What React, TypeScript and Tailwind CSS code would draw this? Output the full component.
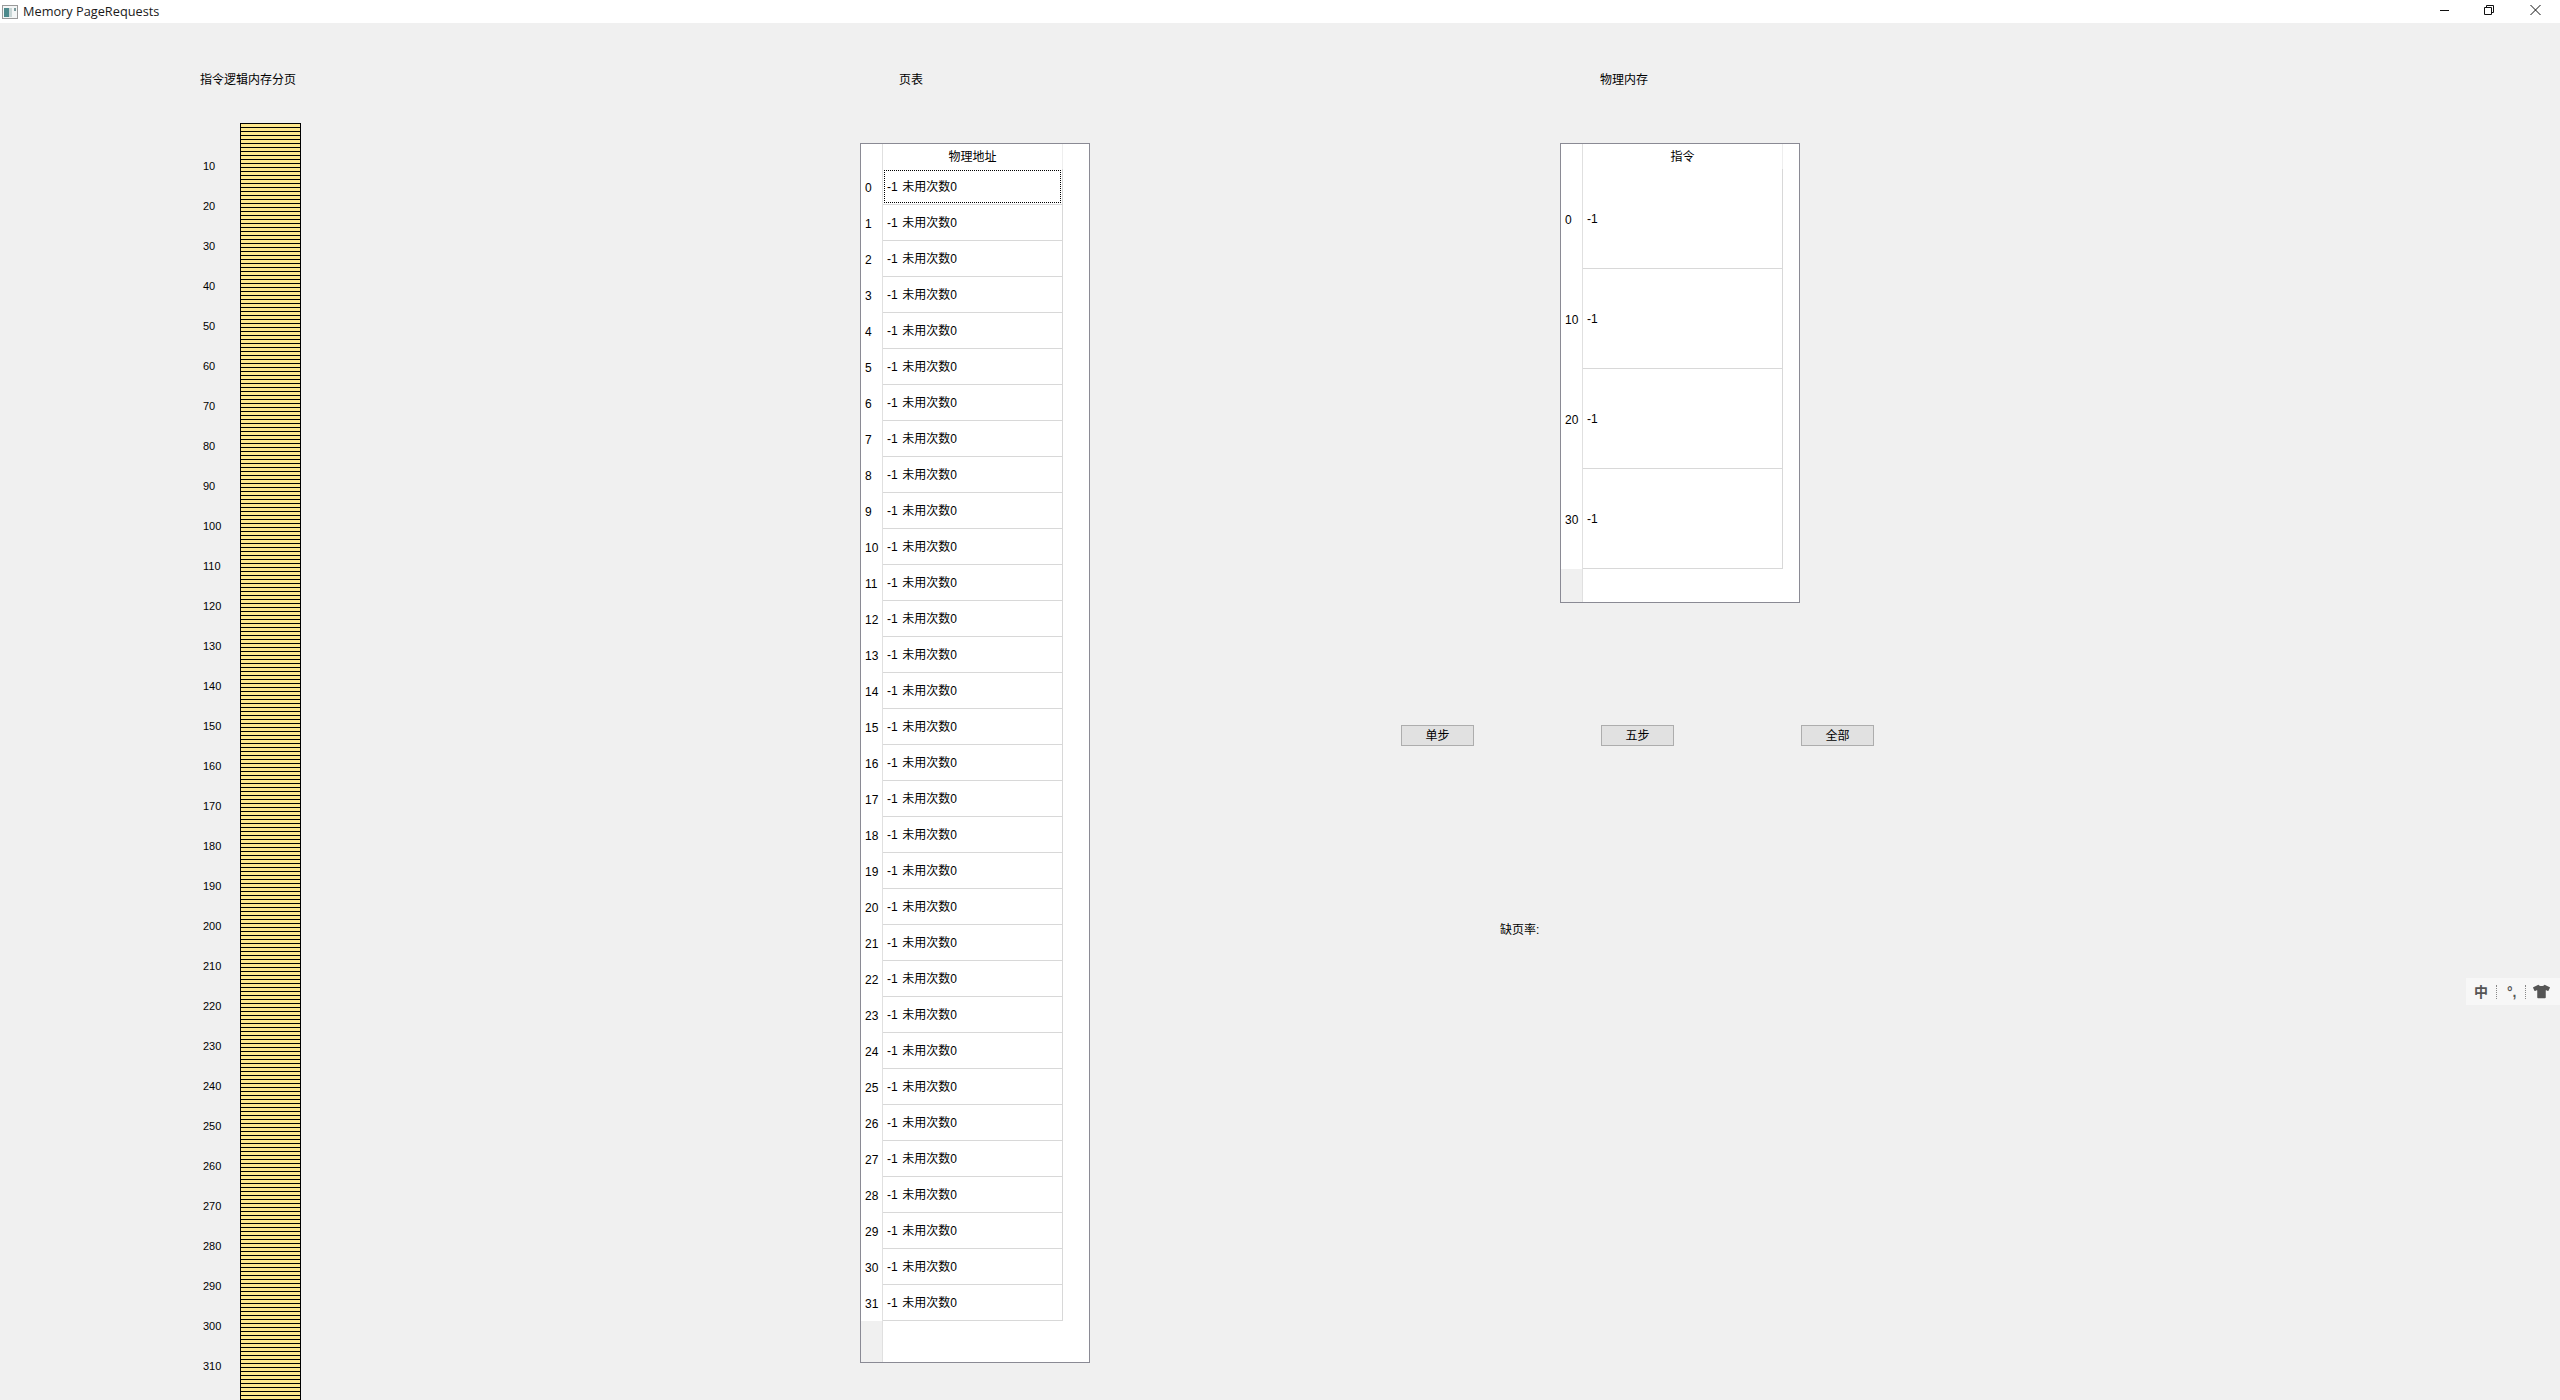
import { FaTshirt } from "react-icons/fa"

const pageLabels = Array.from({ length: 31 }, (_, i) => (i + 1) * 10)
const pageRows = Array.from({ length: 32 }, (_, i) => i)
const memoryRows = [0, 10, 20, 30]

function WindowIcon() {
  return (
    <svg width="16" height="14" viewBox="0 0 16 14" className="shrink-0">
      <rect x="0.5" y="0.5" width="15" height="13" fill="#f4f6f6" stroke="#9a9a9a" />
      <rect x="2" y="3" width="5" height="9" fill="#4d8a8c" />
      <rect x="7" y="3" width="3" height="9" fill="#c9d6d6" />
      <rect x="12" y="3" width="2" height="3" fill="#7a9a9c" />
    </svg>
  )
}

function TitleBar() {
  return (
    <div className="flex h-[23px] items-center bg-white pl-[2px]">
      <WindowIcon />
      <span className="ml-[5px] font-['Open_Sans',sans-serif] text-[12.75px] text-[#1a1a1a]">Memory PageRequests</span>
      <div className="ml-auto flex h-full items-start">
        <svg width="46" height="20" viewBox="0 0 46 20">
          <path d="M2 10.5H11" stroke="#111" />
        </svg>
        <svg width="46" height="20" viewBox="0 0 46 20">
          <path d="M0.5 7.5H7.5V14.5H0.5Z M2.5 7.5V5.5H9.5V12.5H7.5" stroke="#111" fill="none" />
        </svg>
        <svg width="30" height="20" viewBox="0 0 30 20">
          <path d="M0.5 5L10.5 15M10.5 5L0.5 15" stroke="#111" fill="none" />
        </svg>
      </div>
    </div>
  )
}

function LogicalPages() {
  return (
    <div className="w-[860px] shrink-0 pl-[200px] pt-[48px]">
      <div className="h-4 pt-px leading-4">指令逻辑内存分页</div>
      <div className="mt-[36px] flex">
        <div className="w-[40px] pl-[3px] pt-[23px]">
          {pageLabels.map((n) => (
            <div key={n} className="flex h-10 items-center text-[11px]">
              {n}
            </div>
          ))}
        </div>
        <div className="h-[1300px] w-[61px] border-x border-black bg-[repeating-linear-gradient(to_bottom,#000_0px,#000_1px,#fee88c_1px,#fee88c_4px)]" />
      </div>
    </div>
  )
}

function PageTable() {
  return (
    <div className="w-[540px] shrink-0 pt-[48px]">
      <div className="h-4 pl-[39px] pt-px leading-4">页表</div>
      <div className="mt-[56px] flex h-[1220px] w-[230px] border border-[#8a8a94] bg-white">
        <div className="flex w-[22px] flex-col border-r border-[#e0e0e0]">
          <div className="h-[25px] shrink-0" />
          {pageRows.map((n) => (
            <div key={n} className="flex h-9 shrink-0 items-center pl-1 pt-px">
              {n}
            </div>
          ))}
          <div className="flex-1 bg-[#f0f0f0]" />
        </div>
        <div className="w-[180px]">
          <div className="flex h-[25px] items-center justify-center border-r border-[#eeeeee]">物理地址</div>
          {pageRows.map((n) => (
            <div key={n} className="h-9 border-r border-b border-[#d8d8d8] p-px">
              <div
                className={`flex h-full items-center pl-[2px] ${n === 0 ? "border border-dotted border-black" : "border border-transparent"}`}
              >
                -1<span className="ml-[4.5px]">未用次数0</span>
              </div>
            </div>
          ))}
        </div>
      </div>
    </div>
  )
}

function MemoryTable() {
  return (
    <div className="ml-[160px] flex h-[460px] w-[240px] border border-[#8a8a94] bg-white">
      <div className="flex w-[22px] flex-col border-r border-[#e0e0e0]">
        <div className="h-[25px] shrink-0" />
        {memoryRows.map((n) => (
          <div key={n} className="flex h-[100px] shrink-0 items-center pl-1 pt-px">
            {n}
          </div>
        ))}
        <div className="flex-1 bg-[#f0f0f0]" />
      </div>
      <div className="w-[200px]">
        <div className="flex h-[25px] items-center justify-center border-r border-[#eeeeee]">指令</div>
        {memoryRows.map((n) => (
          <div key={n} className="flex h-[100px] items-center border-r border-b border-[#d8d8d8] pl-[4px]">
            -1
          </div>
        ))}
      </div>
    </div>
  )
}

function Controls() {
  return (
    <div className="w-[800px] shrink-0 pt-[48px]">
      <div className="h-4 pl-[200px] pt-px leading-4">物理内存</div>
      <div className="mt-[56px]">
        <MemoryTable />
      </div>
      <div className="mt-[122px] flex gap-[127px] pl-[1px]">
        {["单步", "五步", "全部"].map((label) => (
          <button key={label} className="h-[21px] w-[73px] border border-[#adadad] bg-[#e1e1e1] pt-px leading-[19px]">
            {label}
          </button>
        ))}
      </div>
      <div className="mt-[176px] h-4 pl-[100px] leading-4">缺页率:</div>
    </div>
  )
}

export default function App() {
  return (
    <div className="relative h-[1400px] w-[2560px] overflow-hidden bg-[#f0f0f0] font-['Liberation_Sans','Noto_Sans_CJK_SC',sans-serif] text-[12px] text-black">
      <TitleBar />
      <div className="flex h-[1377px] overflow-hidden">
        <LogicalPages />
        <PageTable />
        <Controls />
      </div>
      {/* input method floating bar */}
      <div className="absolute left-[2466px] top-[978px] flex h-[27px] w-[94px] items-center bg-[#f7f7f7] pl-2 text-[#555]">
        <span className="w-[14px] text-center text-[14px] font-bold leading-none">中</span>
        <span className="ml-[8px] h-[14px] border-l border-dotted border-[#888]" />
        <span className="ml-[10px] w-[10px] text-[14px] font-bold leading-none">°,</span>
        <span className="ml-[8px] h-[14px] border-l border-dotted border-[#888]" />
        <FaTshirt size={17} className="ml-[7px] text-[#555]" />
      </div>
    </div>
  )
}
